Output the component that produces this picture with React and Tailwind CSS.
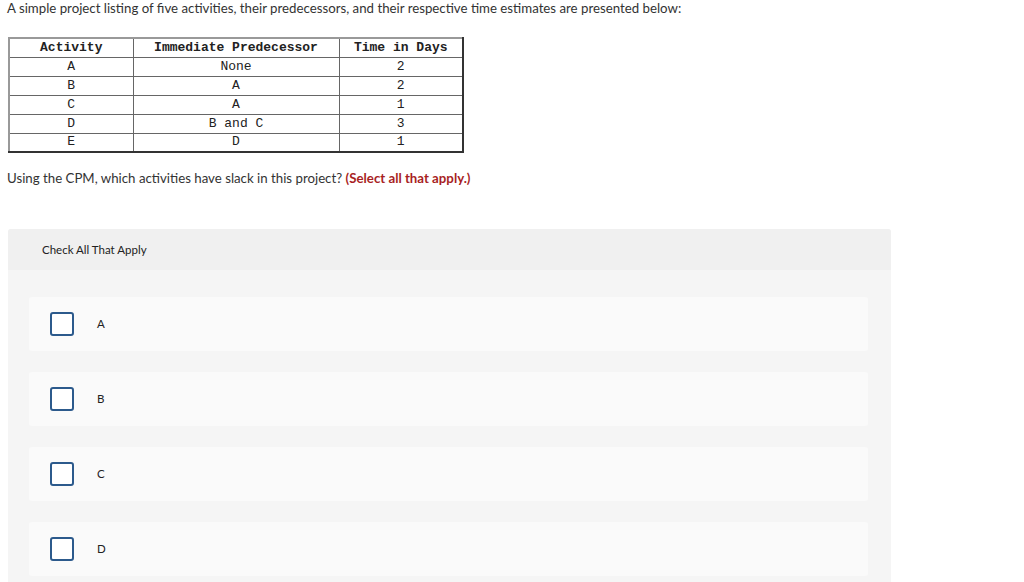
import React from 'react';

const rows = [
  ['A', 'None', '2'],
  ['B', 'A', '2'],
  ['C', 'A', '1'],
  ['D', 'B and C', '3'],
  ['E', 'D', '1'],
];

const options = ['A', 'B', 'C', 'D'];

export default function App() {
  return (
    <div className="min-h-[582px] bg-white text-[#333] font-['Lato',sans-serif]">
      {/* Prompt */}
      <p className="pl-[7px] pt-0 text-[13.25px] leading-[16px]">
        A simple project listing of five activities, their predecessors, and their respective time estimates are presented below:
      </p>

      {/* Table */}
      <table className="ml-[8px] mt-[21px] border-collapse border-2 border-t-[#999] border-l-[#999] border-r-[#333] border-b-[#333] font-['Liberation_Mono',monospace] text-[13px] leading-[16px] text-[#222]">
        <thead>
          <tr className="h-[19px]">
            <th className="w-[124px] p-0 border border-[#666] font-bold">Activity</th>
            <th className="w-[206px] p-0 border border-[#666] font-bold">Immediate Predecessor</th>
            <th className="w-[124px] p-0 border border-[#666] font-bold">Time in Days</th>
          </tr>
        </thead>
        <tbody>
          {rows.map((r) => (
            <tr key={r[0]} className="h-[19px]">
              {r.map((c, i) => (
                <td key={i} className="p-0 border border-[#666] text-center font-normal">
                  {c}
                </td>
              ))}
            </tr>
          ))}
        </tbody>
      </table>

      {/* Question */}
      <p className="pl-[7px] mt-[17px] text-[13.25px] leading-[16px]">
        Using the CPM, which activities have slack in this project?{' '}
        <span className="font-bold text-[#a81f1f]">(Select all that apply.)</span>
      </p>

      {/* Answer panel */}
      <div className="ml-[8px] mt-[43px] w-[883px] rounded-t-[3px] bg-[#f5f5f5]">
        <div className="h-[41px] bg-[#f0f0f0] rounded-t-[3px] flex items-center pl-[34px] text-[11.5px] text-[#222]">
          Check All That Apply
        </div>
        <div className="flex flex-col gap-[21px] pl-[21px] pr-[23px] pt-[27px] pb-[20px]">
          {options.map((o) => (
            <label key={o} className="h-[54px] bg-[#fafafa] rounded-[3px] flex items-center pl-[21px]">
              <span className="w-[24px] h-[24px] border-2 border-[#2c5a8c] rounded-[3px] bg-white shrink-0" />
              <span className="ml-[23px] text-[11.5px] text-[#222]">{o}</span>
            </label>
          ))}
        </div>
      </div>
    </div>
  );
}
